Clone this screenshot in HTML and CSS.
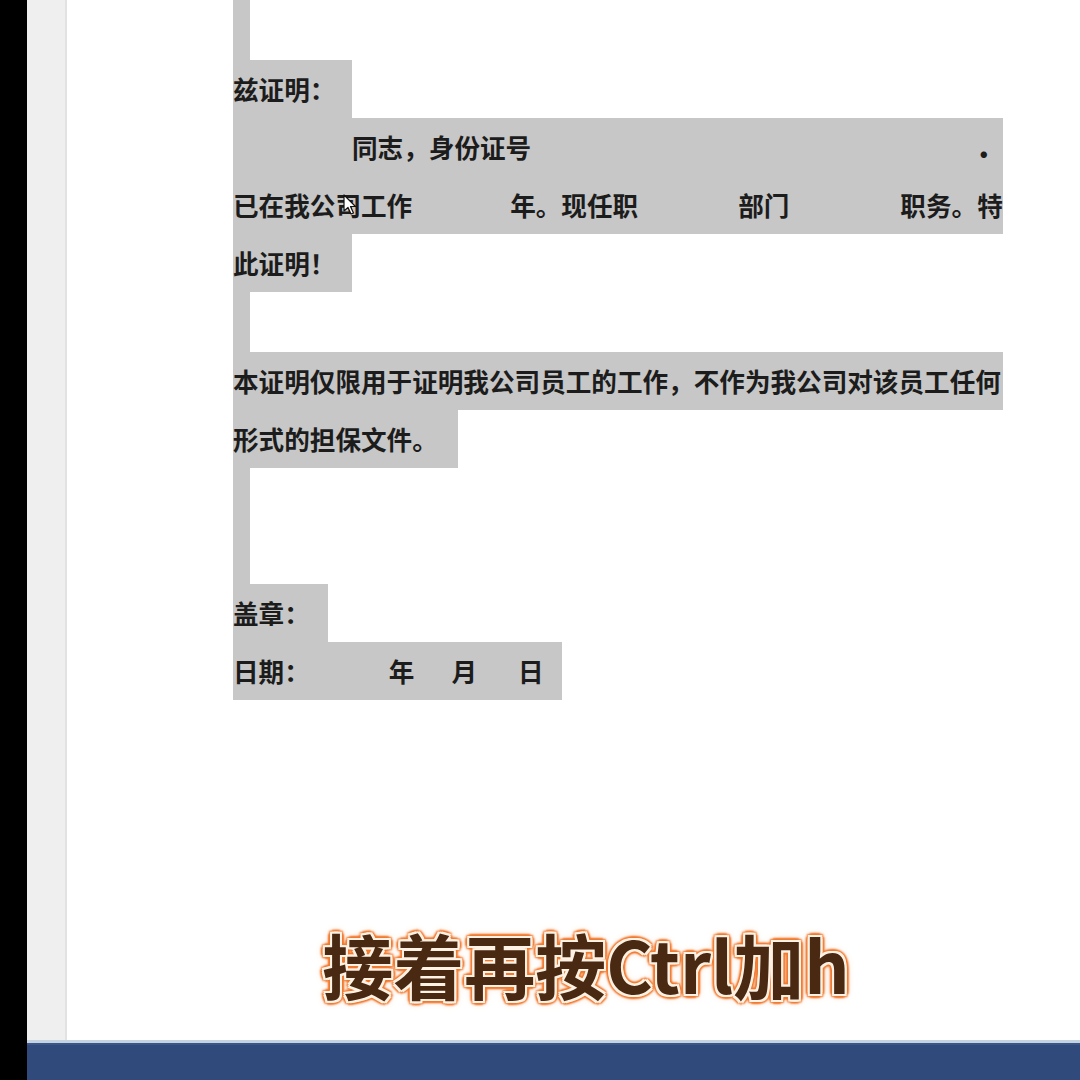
FILE: index.html
```html
<!DOCTYPE html>
<html lang="zh-CN">
<head>
    <meta charset="UTF-8">
    <meta name="viewport" content="width=device-width, initial-scale=1.0">
    <title>在职证明</title>
    <link rel="stylesheet" href="styles.css">
</head>
<body>
    <div class="screen">
        <div class="edge"></div>
        <div class="window">
            <div class="workspace">
                <div class="nav-pane"></div>
                <div class="page">
                    <div class="doc">
                        <div class="line blank first"></div>
                        <div class="line short">兹证明：</div>
                        <div class="line full indent">
                            <span>同志，身份证号</span>
                            <span class="dot">.</span>
                        </div>
                        <div class="line full spread">
                            <span>已在我公司工作</span>
                            <span class="years">年。现任职</span>
                            <span class="dept">部门</span>
                            <span class="post">职务。特</span>
                        </div>
                        <div class="line short">此证明！</div>
                        <div class="line blank gap"></div>
                        <div class="line full">本证明仅限用于证明我公司员工的工作，不作为我公司对该员工任何</div>
                        <div class="line tail">形式的担保文件。</div>
                        <div class="line blank"></div>
                        <div class="line blank"></div>
                        <div class="line seal">盖章：</div>
                        <div class="line date">
                            <span>日期：</span>
                            <span class="year">年</span>
                            <span class="month">月</span>
                            <span class="day">日</span>
                        </div>
                    </div>
                    <svg class="cursor" width="14" height="22" viewBox="0 0 14 22">
                        <path d="M1 1 L1 17 L5 13.5 L8 20 L10.5 19 L7.5 12.5 L12.5 12.5 Z" fill="#fff" stroke="#111" stroke-width="1.2" stroke-linejoin="round"/>
                    </svg>
                </div>
            </div>
            <div class="statusbar"></div>
        </div>
        <div class="subtitle">接着再按Ctrl加h</div>
    </div>
</body>
</html>
```

FILE: styles.css
```css
body {
    margin: 0;
    font-family: "Noto Sans CJK SC", "Noto Sans", sans-serif;
    background: #000;
}
.screen {
    position: relative;
    width: 1080px;
    height: 1080px;
    display: flex;
    overflow: hidden;
}
.edge {
    width: 27px;
    background: #000;
}
.window {
    flex: 1;
    display: flex;
    flex-direction: column;
}
.workspace {
    flex: 1;
    display: flex;
    background: #fff;
}
.nav-pane {
    width: 38px;
    background: #efefef;
    border-right: 2px solid #e2e2e2;
}
.page {
    position: relative;
    flex: 1;
    background: #fff;
}
.doc {
    padding-left: 166px;
    font-size: 25.6px;
    font-weight: 700;
    color: #1c1c1c;
}
.line {
    height: 58px;
    line-height: 58px;
    background: #c7c7c7;
    white-space: nowrap;
    box-sizing: border-box;
}
.blank {
    width: 17px;
}
.first {
    height: 60px;
}
.gap {
    height: 60px;
}
.short {
    width: 119px;
}
.full {
    width: 770px;
}
.indent {
    display: flex;
    justify-content: space-between;
    padding-left: 119px;
    padding-right: 14px;
}
.dot {
    position: relative;
    top: -2px;
    font-size: 30px;
    font-weight: 900;
}
.spread {
    display: flex;
}
.years {
    margin-left: 98px;
}
.dept {
    margin-left: 100px;
}
.post {
    margin-left: 111px;
}
.tail {
    width: 225px;
}
.seal {
    width: 95px;
}
.date {
    display: flex;
    width: 329px;
}
.year {
    margin-left: 79px;
}
.month {
    margin-left: 37px;
}
.day {
    margin-left: 41px;
}
.cursor {
    position: absolute;
    left: 276px;
    top: 194px;
}
.statusbar {
    height: 37px;
    background: #2f4a7b;
    border-top: 3px solid #c6d3e1;
    box-shadow: inset 0 2px 0 #3b578a;
}
.subtitle {
    position: absolute;
    left: 0;
    right: 0;
    top: 913px;
    padding-left: 92px;
    text-align: center;
    font-size: 71px;
    font-weight: 700;
    line-height: 100px;
    color: #4a2912;
    text-shadow:
        2px 0 0 #fff2e4, -2px 0 0 #fff2e4, 0 2px 0 #fff2e4, 0 -2px 0 #fff2e4,
        2px 2px 0 #fff2e4, -2px -2px 0 #fff2e4, 2px -2px 0 #fff2e4, -2px 2px 0 #fff2e4,
        4px 0 2px #f07a30, -4px 0 2px #f07a30, 0 4px 2px #f07a30, 0 -4px 2px #f07a30,
        3px 3px 2px #f07a30, -3px -3px 2px #f07a30, 3px -3px 2px #f07a30, -3px 3px 2px #f07a30,
        0 0 8px #f5a070;
}
```
